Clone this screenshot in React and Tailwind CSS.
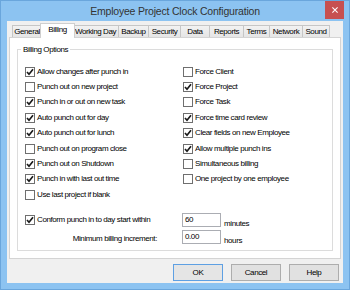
import React from "react";

function Cb({ checked }) {
  return (
    <span className="w-[10px] h-[10px] border border-[#6f6f6f] bg-white flex items-center justify-center shrink-0">
      {checked && (
        <svg viewBox="0 0 8 8" className="w-[8px] h-[8px]">
          <path d="M1 4 L3 6.2 L7 1.3" stroke="#1a1a1a" strokeWidth="1.7" fill="none" />
        </svg>
      )}
    </span>
  );
}

function Row({ checked, label }) {
  return (
    <div className="flex items-center h-[15.4px] gap-[2px]">
      <Cb checked={checked} />
      <span className="leading-none whitespace-nowrap">{label}</span>
    </div>
  );
}

const left = [
  [true, "Allow changes after punch in"],
  [false, "Punch out on new project"],
  [true, "Punch in or out on new task"],
  [true, "Auto punch out for day"],
  [true, "Auto punch out for lunch"],
  [false, "Punch out on program close"],
  [true, "Punch out on Shutdown"],
  [true, "Punch in with last out time"],
  [false, "Use last project if blank"],
];
const right = [
  [false, "Force Client"],
  [true, "Force Project"],
  [false, "Force Task"],
  [true, "Force time card review"],
  [true, "Clear fields on new Employee"],
  [true, "Allow multiple punch ins"],
  [false, "Simultaneous billing"],
  [false, "One project by one employee"],
];

const tabs = [
  ["General", 30],
  ["Billing", 31],
  ["Working Day", 46],
  ["Backup", 30],
  ["Security", 32],
  ["Data", 29],
  ["Reports", 34],
  ["Terms", 26],
  ["Network", 33],
  ["Sound", 27],
];

export default function App() {
  return (
    <div className="w-[350px] h-[290px] bg-[#8cc3f1] border border-[#6aa6dc] flex flex-col font-['Liberation_Sans',Arial,sans-serif] text-[8px] tracking-[-0.4px] text-black overflow-hidden">
      <div className="h-[20px] shrink-0 flex items-center justify-center relative">
        <span className="text-[10.5px] tracking-[-0.2px] text-[#333333] mt-[1px]">Employee Project Clock Configuration</span>
        <div className="absolute right-[5px] top-[-1px] w-[19px] h-[19px] bg-[#c75050] flex items-center justify-center">
          <svg viewBox="0 0 8 8" className="w-[6px] h-[6px]">
            <path d="M0.5 0.5 L7.5 7.5 M7.5 0.5 L0.5 7.5" stroke="white" strokeWidth="1.4" />
          </svg>
        </div>
      </div>
      <div className="mx-[6px] mb-[6px] flex-1 bg-[#f0f0f0] flex flex-col pl-[2px] pr-[2px] pt-[2px]">
        <div className="flex h-[14px] items-end pl-[3px] relative z-10">
          {tabs.map(([t, w], i) => {
            const sel = t === "Billing";
            return sel ? (
              <div
                key={t}
                style={{ width: w + 4 }}
                className="h-[15px] -mx-[2px] -mb-[1px] bg-white border-t border-l border-r border-[#cfcfcf] flex items-center justify-center relative z-20 pb-[2px]"
              >
                {t}
              </div>
            ) : (
              <div
                key={t}
                style={{ width: w }}
                className={
                  "h-[12px] bg-gradient-to-b from-[#f2f2f2] to-[#e5e5e5] border-t border-r border-[#c6c6c6] flex items-center justify-center " +
                  (i === 0 ? "border-l" : "")
                }
              >
                {t}
              </div>
            );
          })}
        </div>
        <div className="bg-white border border-[#d4d4d4] w-[332px] h-[222px] px-[7px] pb-[7px] pt-[6px]">
          <fieldset className="border border-[#dcdcdc] h-full px-[7px] pb-[7px]">
            <legend className="px-[2px] ml-[-4px] leading-[11px]">Billing Options</legend>
            <div className="flex pt-[9px]">
              <div className="w-[158px]">
                {left.map(([c, l]) => (
                  <Row key={l} checked={c} label={l} />
                ))}
              </div>
              <div>
                {right.map(([c, l]) => (
                  <Row key={l} checked={c} label={l} />
                ))}
              </div>
            </div>
            <div className="mt-[10px] flex flex-col gap-[3px]">
              <div className="flex items-center h-[14px]">
                <div className="w-[157px] flex items-center gap-[2px]">
                  <Cb checked />
                  <span className="whitespace-nowrap">Conform punch in to day start within</span>
                </div>
                <div className="w-[39px] h-[14px] border border-[#abadb3] bg-white flex items-center pl-[2px]">60</div>
                <span className="ml-[3px] self-end mb-[-3px]">minutes</span>
              </div>
              <div className="flex items-center h-[14px]">
                <div className="w-[157px] text-right pr-[25px] whitespace-nowrap mt-[5px]">Minimum billing increment:</div>
                <div className="w-[39px] h-[14px] border border-[#abadb3] bg-white flex items-center pl-[2px]">0.00</div>
                <span className="ml-[3px] self-end mb-[-3px]">hours</span>
              </div>
            </div>
          </fieldset>
        </div>
        <div className="flex justify-end gap-[8px] pr-[2px] mt-[5px]">
          <div className="w-[50px] h-[17px] bg-[#e5e5e5] border border-[#5ea0e3] flex items-center justify-center">OK</div>
          <div className="w-[50px] h-[17px] bg-[#e1e1e1] border border-[#adadad] flex items-center justify-center">Cancel</div>
          <div className="w-[50px] h-[17px] bg-[#e1e1e1] border border-[#adadad] flex items-center justify-center">Help</div>
        </div>
      </div>
    </div>
  );
}
